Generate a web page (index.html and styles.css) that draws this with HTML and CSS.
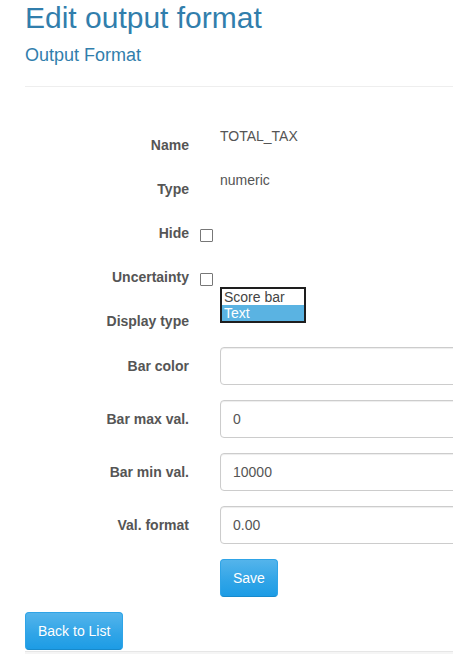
FILE: index.html
```html
<!DOCTYPE html>
<html lang="en">
<head>
<meta charset="utf-8">
<title>Edit output format</title>
<link rel="stylesheet" href="styles.css">
</head>
<body>
<div class="page">
  <h2 class="title">Edit output format</h2>
  <h4 class="subtitle">Output Format</h4>
  <hr class="rule">
  <form class="form">
    <div class="group">
      <label class="label">Name</label>
      <div class="control"><p class="static">TOTAL_TAX</p></div>
    </div>
    <div class="group">
      <label class="label">Type</label>
      <div class="control"><p class="static">numeric</p></div>
    </div>
    <div class="group">
      <label class="label">Hide</label>
      <div class="control"><input class="check" type="checkbox"></div>
    </div>
    <div class="group">
      <label class="label">Uncertainty</label>
      <div class="control"><input class="check" type="checkbox"></div>
    </div>
    <div class="group group-select">
      <label class="label">Display type</label>
      <div class="control">
        <div class="listbox" role="listbox">
          <div class="option" role="option">Score bar</div>
          <div class="option selected" role="option">Text</div>
        </div>
      </div>
    </div>
    <div class="group">
      <label class="label">Bar color</label>
      <div class="control"><input class="input" type="text" value=""></div>
    </div>
    <div class="group">
      <label class="label">Bar max val.</label>
      <div class="control"><input class="input" type="text" value="0"></div>
    </div>
    <div class="group">
      <label class="label">Bar min val.</label>
      <div class="control"><input class="input" type="text" value="10000"></div>
    </div>
    <div class="group">
      <label class="label">Val. format</label>
      <div class="control"><input class="input" type="text" value="0.00"></div>
    </div>
    <div class="group">
      <div class="label"></div>
      <div class="control"><button class="btn" type="button">Save</button></div>
    </div>
  </form>
  <div class="back"><button class="btn" type="button">Back to List</button></div>
  <div class="footer"></div>
</div>
</body>
</html>
```

FILE: styles.css
```css
html, body {
  margin: 0;
  padding: 0;
  overflow: hidden;
  background: #fff;
}
body {
  font-family: "Liberation Sans", Arial, Helvetica, sans-serif;
  font-size: 14px;
  line-height: 20px;
  color: #555;
}
.page {
  width: 800px;
  padding-left: 25px;
}
.title {
  margin: 1px 0 0;
  font-size: 30px;
  line-height: 33px;
  font-weight: normal;
  color: #317eac;
}
.subtitle {
  margin: 11px 0 0;
  font-size: 18px;
  line-height: 20px;
  font-weight: normal;
  color: #317eac;
}
.rule {
  margin: 21px 0 0;
  border: 0;
  border-top: 1px solid #eee;
  height: 0;
}
.form {
  margin-top: 39px;
  display: flex;
  flex-direction: column;
  gap: 15px;
}
.group {
  display: grid;
  grid-template-columns: 164px 1fr;
  column-gap: 31px;
  align-items: start;
}
.group-select {
  padding-bottom: 1px;
}
.label {
  padding-top: 9px;
  text-align: right;
  font-weight: bold;
  color: #555;
  line-height: 20px;
  min-height: 20px;
}
.control {
  position: relative;
  min-height: 29px;
}
.static {
  margin: 0;
  line-height: 20px;
}
.check {
  -webkit-appearance: none;
  appearance: none;
  display: block;
  width: 13px;
  height: 13px;
  margin: 15px 0 0 -20px;
  border: 1px solid #777;
  border-radius: 1px;
  background: #fff;
  box-sizing: border-box;
}
.listbox {
  margin-top: -15px;
  width: 86px;
  border: 2px solid #1e1e1e;
  box-sizing: border-box;
  background: #fff;
}
.option {
  font-size: 14px;
  line-height: 16px;
  height: 16px;
  padding-left: 2px;
  color: #444;
}
.option.selected {
  background: #5ab3e2;
  color: #fff;
}
.input {
  display: block;
  box-sizing: border-box;
  width: 100%;
  height: 38px;
  padding: 8px 12px;
  font-family: inherit;
  font-size: 14px;
  line-height: 20px;
  color: #555;
  background: #fff;
  border: 1px solid #ccc;
  border-radius: 4px;
  box-shadow: inset 0 1px 1px rgba(0, 0, 0, 0.075);
  outline: none;
}
.btn {
  display: inline-block;
  box-sizing: border-box;
  height: 38px;
  padding: 8px 12px;
  font-family: inherit;
  font-size: 14px;
  line-height: 20px;
  color: #fff;
  text-shadow: 0 1px 0 rgba(0, 0, 0, 0.05);
  background-color: #2fa4e7;
  background-image: linear-gradient(#54b4eb, #2fa4e7 60%, #1d9ce5);
  border: 1px solid #2fa4e7;
  border-bottom-color: #178acc;
  border-radius: 4px;
  cursor: pointer;
}
.back {
  margin-top: 15px;
}
.footer {
  margin-top: 1px;
  height: 30px;
  border-top: 1px solid #e6e6e6;
  background: #f5f5f5;
}
```
